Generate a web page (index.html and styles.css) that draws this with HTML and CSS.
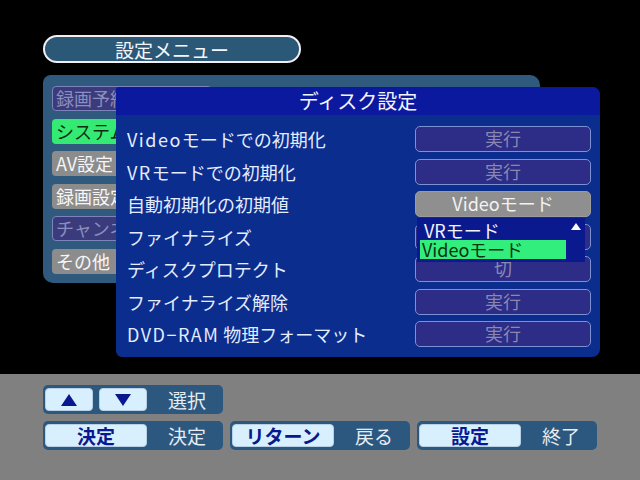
FILE: index.html
```html
<!DOCTYPE html>
<html lang="ja">
<head>
  <meta charset="UTF-8" />
  <title>設定メニュー - ディスク設定</title>
  <link rel="stylesheet" href="styles.css">
</head>
<body>
  <div class="screen">
    <div class="main">
      <div class="title-pill">設定メニュー</div>
      <div class="stage">
        <div class="side-panel">
          <div class="menu-item off">録画予約</div>
          <div class="menu-item on">システム設定</div>
          <div class="menu-item">AV設定</div>
          <div class="menu-item">録画設定</div>
          <div class="menu-item off">チャンネル設定</div>
          <div class="menu-item">その他</div>
        </div>
        <div class="dialog">
          <div class="dialog-title">ディスク設定</div>
          <div class="dialog-body">
            <div class="row"><span class="row-label"><span class="lat">Video</span>モードでの初期化</span><span class="btn">実行</span></div>
            <div class="row"><span class="row-label"><span class="lat">VR</span>モードでの初期化</span><span class="btn">実行</span></div>
            <div class="row"><span class="row-label">自動初期化の初期値</span>
              <span class="btn sel">Videoモード
                <span class="dropdown">
                  <span class="opt">VRモード<svg class="up" width="10" height="7" viewBox="0 0 10 7"><polygon points="5,0 10,7 0,7" fill="#fff"/></svg></span>
                  <span class="opt hl">Videoモード</span>
                </span>
              </span>
            </div>
            <div class="row"><span class="row-label">ファイナライズ</span><span class="btn">実行</span></div>
            <div class="row"><span class="row-label">ディスクプロテクト</span><span class="btn">切</span></div>
            <div class="row"><span class="row-label">ファイナライズ解除</span><span class="btn">実行</span></div>
            <div class="row"><span class="row-label"><span class="lat">DVD−RAM</span> 物理フォーマット</span><span class="btn">実行</span></div>
          </div>
        </div>
      </div>
    </div>
    <div class="guide">
      <div class="guide-row">
        <div class="group">
          <span class="key small"><svg width="16" height="12" viewBox="0 0 16 12"><polygon points="8,0 16,12 0,12" fill="#0a1890"/></svg></span>
          <span class="key small"><svg width="16" height="12" viewBox="0 0 16 12"><polygon points="0,0 16,0 8,12" fill="#0a1890"/></svg></span>
          <span class="glabel">選択</span>
        </div>
      </div>
      <div class="guide-row">
        <div class="group"><span class="key">決定</span><span class="glabel">決定</span></div>
        <div class="group"><span class="key">リターン</span><span class="glabel">戻る</span></div>
        <div class="group"><span class="key">設定</span><span class="glabel">終了</span></div>
      </div>
    </div>
  </div>
</body>
</html>
```

FILE: styles.css
```css
body { margin: 0; background: #000; font-family: "Noto Sans CJK JP", "Noto Sans", sans-serif; color: #eef2ff; }
.screen { width: 640px; height: 480px; display: flex; flex-direction: column; overflow: hidden; }
.main { height: 374px; box-sizing: border-box; padding: 35px 0 0 43px; background: #000; }

.title-pill { width: 258px; height: 28px; box-sizing: border-box; border: 2px solid #f2eef4; border-radius: 14px; background: #2c5878; display: flex; align-items: center; justify-content: center; font-size: 19px; line-height: 1; color: #f4f6fa; }

.stage { position: relative; margin-top: 12px; }
.side-panel { width: 497px; height: 208px; box-sizing: border-box; background: #2f5a7e; border-radius: 8px 10px 8px 10px; padding: 11px 0 0 9px; display: flex; flex-direction: column; gap: 7.5px; }
.menu-item { width: 160px; height: 25px; box-sizing: border-box; border-radius: 4px; background: #8c8c8c; color: #f6f6f6; font-size: 18px; line-height: 25px; padding-left: 4px; white-space: nowrap; overflow: hidden; }
.menu-item.off { background: #393b7c; border: 1px solid #7c82ba; color: #8c8ebe; line-height: 23px; padding-left: 3px; }
.menu-item.on { background: #34ea72; color: #0c2a12; }

.dialog { position: absolute; left: 73px; top: 12px; width: 484px; height: 270px; background: #0b2d8d; border-radius: 3px 8px 8px 6px; }
.dialog-title { height: 28px; background: #0b199e; border-radius: 3px 8px 0 0; text-align: center; font-size: 20px; line-height: 28px; color: #f2f4ff; }
.dialog-body { padding: 11px 9px 0 11px; display: flex; flex-direction: column; gap: 6.5px; }
.row { height: 26px; display: flex; align-items: center; }
.row-label { flex: 1; font-size: 18px; color: #e4ecff; white-space: nowrap; }
.lat { letter-spacing: 1.5px; }
.btn { position: relative; width: 176px; height: 26px; box-sizing: border-box; border: 1.5px solid #7d90d2; border-radius: 5px; background: #2d2c86; color: #8888b2; font-size: 18px; line-height: 23px; text-align: center; }
.btn.sel { background: #8f8f8f; border-color: #9c9c9c; color: #f2f2f2; }

.dropdown { position: absolute; left: 1px; top: 25.5px; width: 168px; height: 44px; box-sizing: border-box; background: #0a1a8e; padding: 2px 0 0 3px; display: flex; flex-direction: column; z-index: 2; text-align: left; }
.opt { height: 20px; line-height: 20px; font-size: 18px; color: #f2f4ff; padding-left: 4px; display: flex; align-items: center; }
.opt .up { margin-left: auto; margin-right: 4px; margin-top: -6px; }
.opt.hl { width: 146px; height: 19px; box-sizing: border-box; background: #32ee7c; color: #0a3410; padding-left: 2px; }

.guide { flex: 1; background: #808080; padding: 11px 0 0 43px; display: flex; flex-direction: column; gap: 7px; }
.guide-row { display: flex; gap: 7px; }
.group { width: 180px; height: 29px; box-sizing: border-box; background: #2c5880; border-radius: 5px; padding: 3px 2px; display: flex; gap: 6px; }
.key { width: 102px; height: 23px; box-sizing: border-box; background: #d8f0fd; border: 1px solid #b8d0e6; border-radius: 4px; color: #0a1890; font-size: 19px; font-weight: bold; line-height: 21px; text-align: center; display: flex; align-items: center; justify-content: center; }
.key.small { width: 48px; }
.glabel { flex: 1; font-size: 19px; line-height: 23px; color: #e6ecf2; text-align: center; }
```
